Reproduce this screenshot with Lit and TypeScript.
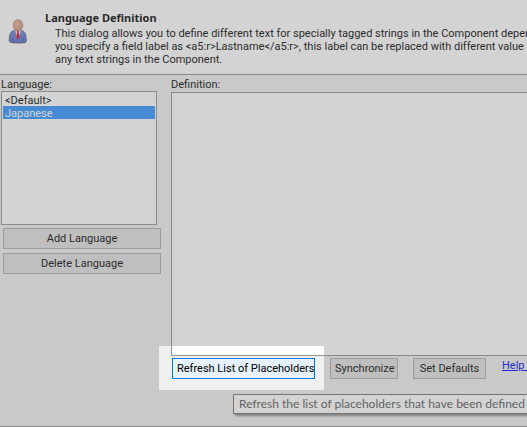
import { LitElement, html, css, svg } from "lit";
import { customElement, property } from "lit/decorators.js";

@customElement("user-icon")
class UserIcon extends LitElement {
  static styles = css`
    :host { display: block; width: 20px; height: 26px; }
    .icon { display: block; width: 100%; height: 100%; }
  `;
  render() {
    return html`<svg class="icon" viewBox="0 0 20 26" aria-hidden="true">${svg`
      <defs>
        <linearGradient id="suit" x1="0" y1="0" x2="0" y2="1">
          <stop offset="0" stop-color="#6e86cc"></stop>
          <stop offset="1" stop-color="#566cd0"></stop>
        </linearGradient>
        <radialGradient id="skin" cx=".45" cy=".45" r=".65">
          <stop offset="0" stop-color="#f0b89e"></stop>
          <stop offset="1" stop-color="#c08878"></stop>
        </radialGradient>
      </defs>
      <ellipse cx="10" cy="23.500" rx="8" ry="1" fill="#888"></ellipse>
      <path d="M7 11C4 12 2.200 13.200 1.700 16L1 21.500C1 23 3 23.500 5 23.500H15.500C17.500 23.500 18.500 23 18.500 21.500L17.800 16C17.200 13.200 15.500 12 12.800 11Z" fill="url(#suit)" stroke="#43508c" stroke-width=".7"></path>
      <path d="M7 11.500L10 20L13 11.500Z" fill="#f2eef6"></path>
      <path d="M9 12h2l-.2 1.700.6 4.300-1.400 3-1.400-3 .6-4.300Z" fill="#e80010"></path>
      <path d="M4.500 18v5M15.500 18v5" fill="none" stroke="#3c4a8c" stroke-width=".5"></path>
      <ellipse cx="10" cy="6.200" rx="5" ry="5.600" fill="url(#skin)" stroke="#a87868" stroke-width=".4"></ellipse>
    `}</svg>`;
  }
}

@customElement("app-root")
class AppRoot extends LitElement {
  @property({ attribute: false }) languages = ["<Default>", "Japanese"];
  @property() selected = "Japanese";

  static styles = css`
    * { box-sizing: border-box; }
    :host {
      display: flex;
      flex-direction: column;
      min-height: 100vh;
      overflow: hidden;
      position: relative;
      background: #f0f0f0;
      color: #000;
      font: 11px/13px Tahoma, Roboto, sans-serif;
      white-space: nowrap;
    }
    .header {
      display: flex;
      gap: 17px;
      padding: 11px 0 8px 8px;
      background: #fff;
      border-bottom: 1px solid #929292;
    }
    .portrait { flex: none; margin-top: 8px; }
    .title { margin: 0 0 3px; font: bold 11px/13px Tahoma, "Noto Sans", sans-serif; }
    .intro { margin: 0 0 0 10px; white-space: pre; }
    .body {
      flex: 1;
      display: grid;
      grid-template-columns: 160px 1fr;
      column-gap: 10px;
      padding: 3px 0 0 1px;
      border-bottom: 1px solid #929292;
    }
    .side, .main { display: flex; flex-direction: column; min-width: 0; }
    .list {
      width: 156px;
      height: 134px;
      padding: 1px;
      overflow: hidden;
      border: 1px solid #929292;
      border-radius: 0;
      background: #fff;
      font: inherit;
      outline: 0;
    }
    .option { height: 13px; min-height: 13px; padding: 1px 2px 0; line-height: 13px; color: #000; }
    .option:checked {
      background: #2d92ff linear-gradient(#2d92ff, #2d92ff);
      color: #fff;
    }
    .label { height: 13px; }
    .side-actions { display: grid; gap: 4px; margin: 3px 0 0 2px; }
    .button {
      height: 21px;
      padding: 1px 4px 0;
      border: 1px solid #adadad;
      border-radius: 0;
      background: #e1e1e1;
      color: #000;
      font: inherit;
      line-height: 18px;
    }
    .button.hot { padding: 1px 0 0 4px; border-color: #0078d7; background: #e5f1fb; text-align: left; }
    .editor {
      display: block;
      width: calc(100% + 20px);
      height: 264px;
      padding: 2px;
      resize: none;
      border: 1px solid #929292;
      border-radius: 0;
      background: #fff;
      font: inherit;
      outline: 0;
    }
    .main .label { margin-bottom: 1px; }
    .actions { display: flex; padding: 2px 0 0 1px; }
    .focus { position: relative; flex: none; width: 143px; margin-right: 15px; }
    .focus .button { width: 100%; }
    .sync { flex: none; width: 68px; margin-right: 15px; }
    .defaults { flex: none; width: 73px; margin-right: 16px; }
    .help { flex: none; line-height: 15px; color: #00f; }
    .spotlight {
      position: absolute;
      z-index: 2;
      inset: -12px -9px -11px -13px;
      box-shadow: 0 0 0 4000px rgba(120, 120, 120, 0.33);
      pointer-events: none;
    }
    .tooltip {
      position: absolute;
      z-index: 1;
      top: 36px;
      left: 61px;
      height: 20px;
      padding: 0 12px 0 5px;
      border: 1px solid #767676;
      background: #fff;
      box-shadow: 2px 2px 2px #888;
      color: #575757;
      font: 12px/18px "Segoe UI", Lato, sans-serif;
    }
  `;

  render() {
    return html`
      <header class="header">
        <user-icon class="portrait"></user-icon>
        <div>
          <h1 class="title">Language Definition</h1>
          <p class="intro">This dialog allows you to define different text for specially tagged strings in the Component depend
you specify a field label as &lt;a5:r&gt;Lastname&lt;/a5:r&gt;, this label can be replaced with different value
any text strings in the Component.</p>
        </div>
      </header>
      <main class="body">
        <section class="side">
          <label class="label" for="language">Language:</label>
          <select class="list" id="language" size="10">
            ${this.languages.map(
              (name) => html`<option class="option" ?selected=${name === this.selected}>${name}</option>`
            )}
          </select>
          <div class="side-actions">
            <button class="button">Add Language</button>
            <button class="button">Delete Language</button>
          </div>
        </section>
        <section class="main">
          <label class="label" for="definition">Definition:</label>
          <textarea class="editor" id="definition"></textarea>
          <div class="actions">
            <div class="focus">
              <button class="button hot" aria-describedby="tip">Refresh List of Placeholders</button>
              <div class="tooltip" id="tip" role="tooltip">Refresh the list of placeholders that have been defined</div>
              <div class="spotlight"></div>
            </div>
            <button class="button sync">Synchronize</button>
            <button class="button defaults">Set Defaults</button>
            <a class="help" href="#help">Help on</a>
          </div>
        </section>
      </main>
    `;
  }
}
